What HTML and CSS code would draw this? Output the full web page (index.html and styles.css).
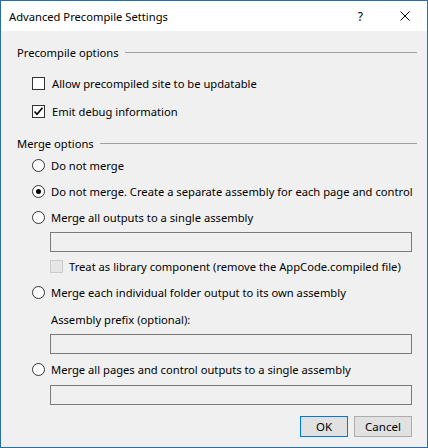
FILE: index.html
```html
<!DOCTYPE html>
<html>
<head>
<meta charset="utf-8">
<link rel="stylesheet" href="styles.css">
</head>
<body>
<div class="dialog">
  <div class="titlebar">
    <span class="title">Advanced Precompile Settings</span>
    <span class="help">?</span>
    <svg class="close" width="10" height="10" viewBox="0 0 10 10"><path d="M0.5 0.5 L9.5 9.5 M9.5 0.5 L0.5 9.5" stroke="#000" stroke-width="1" fill="none"/></svg>
  </div>
  <div class="content">
    <div class="row header h1"><span>Precompile options</span><div class="line"></div></div>
    <div class="row ind m11"><span class="cb"></span><span>Allow precompiled site to be updatable</span></div>
    <div class="row ind m8"><span class="cb"><svg width="11" height="11" viewBox="0 0 11 11"><path d="M1.5 5.5 L4 8.2 L9.5 1.8" stroke="#000" stroke-width="1.6" fill="none"/></svg></span><span>Emit debug information</span></div>
    <div class="row header m12"><span>Merge options</span><div class="line"></div></div>
    <div class="row ind m2"><span class="rb"></span><span>Do not merge</span></div>
    <div class="row ind m6"><span class="rb on"></span><span>Do not merge. Create a separate assembly for each page and control</span></div>
    <div class="row ind m6"><span class="rb"></span><span>Merge all outputs to a single assembly</span></div>
    <div class="tb m5"></div>
    <div class="row ind2 m4"><span class="cb dis"></span><span>Treat as library component (remove the AppCode.compiled file)</span></div>
    <div class="row ind m6"><span class="rb"></span><span>Merge each individual folder output to its own assembly</span></div>
    <div class="row ind3 m7"><span>Assembly prefix (optional):</span></div>
    <div class="tb m5"></div>
    <div class="row ind m5"><span class="rb"></span><span>Merge all pages and control outputs to a single assembly</span></div>
    <div class="tb m6"></div>
    <div class="buttons">
      <button class="btn def">OK</button>
      <button class="btn">Cancel</button>
    </div>
  </div>
</div>
</body>
</html>
```
FILE: styles.css
```css
html, body { margin: 0; padding: 0; }
body {
  font-family: "Noto Sans", "DejaVu Sans", sans-serif;
  font-size: 11.2px;
  color: #000;
  background: #f0f0f0;
}
.dialog {
  width: 428px;
  height: 448px;
  box-sizing: border-box;
  border: 1px solid #2b6ca8;
  background: #f0f0f0;
  display: flex;
  flex-direction: column;
}
.titlebar {
  height: 30px;
  background: #fff;
  display: flex;
  align-items: center;
}
.title { margin-left: 8px; }
.help { margin-left: auto; margin-right: 37px; font-size: 12px; }
.close { margin-right: 17px; }
.content {
  display: flex;
  flex-direction: column;
  padding: 0 15px 0 16px;
}
.row {
  height: 20px;
  display: flex;
  align-items: center;
  white-space: nowrap;
}
.header { margin-right: -5px; }
.header .line {
  flex: 1;
  height: 1px;
  background: #a0a0a0;
  margin-left: 6px;
}
.h1 { margin-top: 11px; }
.m2 { margin-top: 2px; }
.m4 { margin-top: 4px; }
.m5 { margin-top: 5px; }
.m6 { margin-top: 6px; }
.m7 { margin-top: 7px; }
.m8 { margin-top: 8px; }
.m11 { margin-top: 11px; }
.m12 { margin-top: 12px; }
.ind { padding-left: 15px; }
.ind2 { padding-left: 33px; }
.ind3 { padding-left: 34px; }
.cb {
  width: 13px;
  height: 13px;
  box-sizing: border-box;
  border: 1px solid #333;
  background: #fff;
  margin-right: 7px;
  display: flex;
  align-items: center;
  justify-content: center;
  flex: none;
}
.cb.dis {
  border-color: #cccccc;
  background: #e6e6e6;
  margin-right: 6px;
}
.rb {
  width: 13px;
  height: 13px;
  box-sizing: border-box;
  border: 1px solid #333;
  border-radius: 50%;
  background: #fff;
  margin-right: 6px;
  flex: none;
  display: flex;
  align-items: center;
  justify-content: center;
}
.rb.on::after {
  content: "";
  width: 5px;
  height: 5px;
  border-radius: 50%;
  background: #000;
}
.tb {
  height: 20px;
  box-sizing: border-box;
  border: 1px solid #7a7a7a;
  background: #f0f0f0;
  margin-left: 33px;
}
.buttons {
  display: flex;
  justify-content: flex-end;
  gap: 6px;
  margin-top: 11px;
}
.btn {
  font-family: inherit;
  font-size: 11.5px;
  height: 21px;
  box-sizing: border-box;
  background: #e1e1e1;
  border: 1px solid #adadad;
  padding: 0;
  color: #000;
  width: 58px;
}
.btn.def {
  border-color: #0078d7;
  width: 48px;
}
```
